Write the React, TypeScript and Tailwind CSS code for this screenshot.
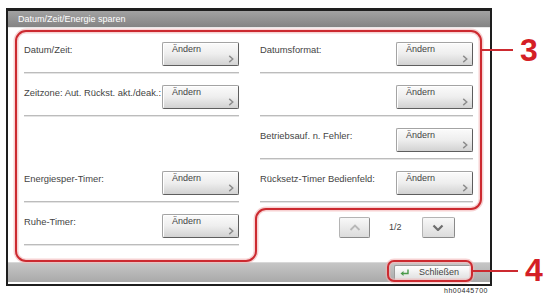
const FONT = "font-['Liberation_Sans',Arial,sans-serif]";

function Chevron({ up, color, width = 1.6 }: { up?: boolean; color: string; width?: number }) {
  return (
    <svg width="12" height="7" viewBox="0 0 12 7">
      <path
        d={up ? "M1.5 6 L6 1.5 L10.5 6" : "M1.5 1.5 L6 6 L10.5 1.5"}
        fill="none"
        stroke={color}
        strokeWidth={width}
      />
    </svg>
  );
}

function ChangeButton() {
  return (
    <div className="flex h-[24px] w-[77px] shrink-0 flex-col justify-between rounded-[2px] border border-[#a4a4a4] border-b-[#5e5e5e] border-r-[#5e5e5e] bg-gradient-to-b from-[#fbfbfb] via-[#eeeeee] to-[#d2d2d2] pb-[2px] pl-[9px] pr-[4px] pt-[1px] shadow-[inset_1px_1px_0_#ffffff]">
      <span className="text-[9px] leading-[11px] text-[#444444]">Ändern</span>
      <svg className="self-end" width="6" height="9" viewBox="0 0 6 9">
        <path d="M1 1 L5 4.5 L1 8" fill="none" stroke="#8c8c8c" strokeWidth="1.6" />
      </svg>
    </div>
  );
}

function Row({ label, button = true, line = true }: { label?: string; button?: boolean; line?: boolean }) {
  return (
    <div className="pt-[11px]">
      <div className="flex h-[24px] items-start">
        <span className="min-w-0 flex-1 overflow-visible whitespace-nowrap pt-[2px] text-[9.4px] leading-[11px] text-[#444444]">
          {label}
        </span>
        {button && <ChangeButton />}
      </div>
      <div
        className={`mt-[6px] h-[2px] ${line ? "border-t border-b border-[#bcbcbc] border-b-[#e4e4e4]" : ""}`}
      />
    </div>
  );
}

function PageButton({ up }: { up?: boolean }) {
  return (
    <div
      className={`flex h-[21px] items-center justify-center rounded-[2px] border border-[#b4b4b4] border-b-[#8a8a8a] border-r-[#8a8a8a] bg-gradient-to-b from-[#f8f8f8] to-[#dcdcdc] ${
        up ? "w-[31px]" : "w-[33px]"
      }`}
    >
      {up ? <Chevron up color="#b8b8b8" width={1.8} /> : <Chevron color="#6e6e6e" width={2.2} />}
    </div>
  );
}

export default function App() {
  return (
    <div className={`relative h-[298px] w-[545px] overflow-hidden bg-white ${FONT}`}>
      <div className="ml-[6px] mt-[8px] flex h-[278px] w-[486px] flex-col border-2 border-t-[3px] border-[#1e1e1e]">
        <div className="flex h-[17px] items-center border-b border-[#e8e8e8] bg-gradient-to-b from-[#a2a2a2] to-[#848484] pl-[10px]">
          <span className="text-[9px] leading-[11px] text-white">Datum/Zeit/Energie sparen</span>
        </div>

        <div className="flex h-[234px] gap-x-[21px] bg-white pl-[16px] pr-[15px] pt-[3px]">
          <div className="w-[215px]">
            <Row label="Datum/Zeit:" />
            <Row label="Zeitzone: Aut. Rückst. akt./deak.:" />
            <Row button={false} line={false} />
            <Row label="Energiesper-Timer:" />
            <Row label="Ruhe-Timer:" />
          </div>
          <div className="w-[213px]">
            <Row label="Datumsformat:" />
            <Row />
            <Row label="Betriebsauf. n. Fehler:" />
            <Row label="Rücksetz-Timer Bedienfeld:" />
            <div className="mt-[14px] flex items-center pl-[79px]">
              <PageButton up />
              <span className="ml-[19px] text-[9px] leading-[11px] text-[#444444]">1/2</span>
              <div className="ml-[20px]">
                <PageButton />
              </div>
            </div>
          </div>
        </div>

        <div className="flex h-[20px] items-center justify-end border-t border-[#d8d8d8] bg-gradient-to-b from-[#c6c6c6] to-[#a9a9a9] pr-[18px]">
          <div className="flex h-[16px] w-[78px] items-center rounded-[2px] border border-[#9c9c9c] border-b-[#6a6a6a] border-r-[#6a6a6a] bg-gradient-to-b from-[#ffffff] to-[#dedede] pl-[5px]">
            <svg width="10" height="8" viewBox="0 0 10 8">
              <path d="M8 0.5 V4.5 H3" fill="none" stroke="#4a9a4a" strokeWidth="1.4" />
              <path d="M0.5 4.5 L3.5 2 V7 Z" fill="#4a9a4a" />
            </svg>
            <span className="ml-[9px] text-[9px] leading-[11px] text-[#444444]">Schließen</span>
          </div>
        </div>
      </div>

      <span className="absolute left-[444px] top-[287px] text-[7px] leading-[8px] tracking-[0.5px] text-[#2a2a2a]">
        hh00445700
      </span>

      <svg className="pointer-events-none absolute left-0 top-0" width="545" height="298" viewBox="0 0 545 298">
        <g fill="none" strokeLinejoin="round">
          <path
            d="M26 31 H471 A10 10 0 0 1 481 41 V199 A10 10 0 0 1 471 209 H266 A10 10 0 0 0 256 219 V251 A10 10 0 0 1 246 261 H26 A10 10 0 0 1 16 251 V41 A10 10 0 0 1 26 31 Z"
            stroke="#f2b4b6"
            strokeWidth="5"
            opacity="0.6"
          />
          <path
            d="M26 31 H471 A10 10 0 0 1 481 41 V199 A10 10 0 0 1 471 209 H266 A10 10 0 0 0 256 219 V251 A10 10 0 0 1 246 261 H26 A10 10 0 0 1 16 251 V41 A10 10 0 0 1 26 31 Z"
            stroke="#cc2a30"
            strokeWidth="2"
          />
          <rect x="388" y="261" width="84" height="20" rx="6" stroke="#f2b4b6" strokeWidth="5" opacity="0.6" />
          <rect x="388" y="261" width="84" height="20" rx="6" stroke="#cc2a30" strokeWidth="2" />
          <path d="M482 50 H513" stroke="#cc2a30" strokeWidth="2" />
          <path d="M472 271 H518" stroke="#cc2a30" strokeWidth="2" />
        </g>
      </svg>

      <span className="absolute left-[520px] top-[34px] text-[32px] font-bold leading-[32px] text-[#d41f26]">3</span>
      <span className="absolute left-[525px] top-[254px] text-[32px] font-bold leading-[32px] text-[#d41f26]">4</span>
    </div>
  );
}
